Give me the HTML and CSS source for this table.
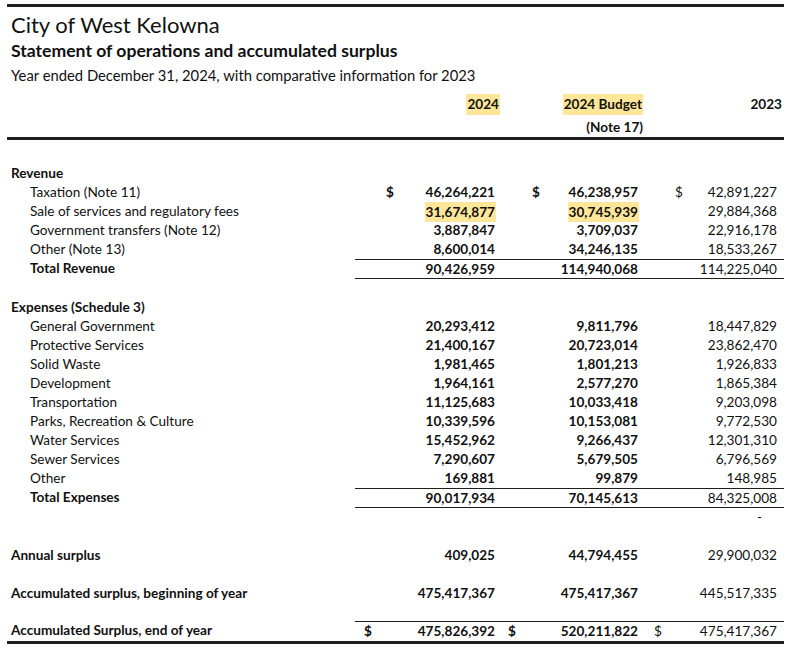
FILE: index.html
```html
<!DOCTYPE html>
<html lang="en">
<head>
<meta charset="utf-8">
<title>City of West Kelowna - Statement of operations</title>
<link rel="stylesheet" href="styles.css">
</head>
<body>
<div class="sheet">
  <div class="head">
    <div class="title">City of West Kelowna</div>
    <div class="subtitle">Statement of operations and accumulated surplus</div>
    <div class="period">Year ended December 31, 2024, with comparative information for 2023</div>
  </div>

  <div class="row colhead">
    <div class="lbl"></div>
    <div class="hc c1"><span class="hl">2024</span></div>
    <div class="hc c2"><span class="hl">2024 Budget</span></div>
    <div class="hc c3">2023</div>
  </div>
  <div class="row notehead">
    <div class="lbl"></div>
    <div class="hc c1"></div>
    <div class="hc c2">(Note 17)</div>
    <div class="hc c3"></div>
  </div>

  <div class="body">
    <div class="row section"><div class="lbl b">Revenue</div><div></div><div></div><div></div></div>
    <div class="row">
      <div class="lbl ind">Taxation (Note 11)</div>
      <div class="m c1 b dl1"><span>$</span><span>46,264,221</span></div>
      <div class="m c2 b dl1"><span>$</span><span>46,238,957</span></div>
      <div class="m c3 dl1"><span>$</span><span>42,891,227</span></div>
    </div>
    <div class="row">
      <div class="lbl ind">Sale of services and regulatory fees</div>
      <div class="m c1 b"><span class="hl">31,674,877</span></div>
      <div class="m c2 b"><span class="hl">30,745,939</span></div>
      <div class="m c3"><span>29,884,368</span></div>
    </div>
    <div class="row">
      <div class="lbl ind">Government transfers (Note 12)</div>
      <div class="m c1 b"><span>3,887,847</span></div>
      <div class="m c2 b"><span>3,709,037</span></div>
      <div class="m c3"><span>22,916,178</span></div>
    </div>
    <div class="row">
      <div class="lbl ind">Other (Note 13)</div>
      <div class="m c1 b"><span>8,600,014</span></div>
      <div class="m c2 b"><span>34,246,135</span></div>
      <div class="m c3"><span>18,533,267</span></div>
    </div>
    <div class="row total">
      <div class="lbl ind b">Total Revenue</div>
      <div class="m c1 b"><span>90,426,959</span></div>
      <div class="m c2 b"><span>114,940,068</span></div>
      <div class="m c3"><span>114,225,040</span></div>
    </div>

    <div class="row section gap"><div class="lbl b">Expenses (Schedule 3)</div><div></div><div></div><div></div></div>
    <div class="row">
      <div class="lbl ind">General Government</div>
      <div class="m c1 b"><span>20,293,412</span></div>
      <div class="m c2 b"><span>9,811,796</span></div>
      <div class="m c3"><span>18,447,829</span></div>
    </div>
    <div class="row">
      <div class="lbl ind">Protective Services</div>
      <div class="m c1 b"><span>21,400,167</span></div>
      <div class="m c2 b"><span>20,723,014</span></div>
      <div class="m c3"><span>23,862,470</span></div>
    </div>
    <div class="row">
      <div class="lbl ind">Solid Waste</div>
      <div class="m c1 b"><span>1,981,465</span></div>
      <div class="m c2 b"><span>1,801,213</span></div>
      <div class="m c3"><span>1,926,833</span></div>
    </div>
    <div class="row">
      <div class="lbl ind">Development</div>
      <div class="m c1 b"><span>1,964,161</span></div>
      <div class="m c2 b"><span>2,577,270</span></div>
      <div class="m c3"><span>1,865,384</span></div>
    </div>
    <div class="row">
      <div class="lbl ind">Transportation</div>
      <div class="m c1 b"><span>11,125,683</span></div>
      <div class="m c2 b"><span>10,033,418</span></div>
      <div class="m c3"><span>9,203,098</span></div>
    </div>
    <div class="row">
      <div class="lbl ind">Parks, Recreation &amp; Culture</div>
      <div class="m c1 b"><span>10,339,596</span></div>
      <div class="m c2 b"><span>10,153,081</span></div>
      <div class="m c3"><span>9,772,530</span></div>
    </div>
    <div class="row">
      <div class="lbl ind">Water Services</div>
      <div class="m c1 b"><span>15,452,962</span></div>
      <div class="m c2 b"><span>9,266,437</span></div>
      <div class="m c3"><span>12,301,310</span></div>
    </div>
    <div class="row">
      <div class="lbl ind">Sewer Services</div>
      <div class="m c1 b"><span>7,290,607</span></div>
      <div class="m c2 b"><span>5,679,505</span></div>
      <div class="m c3"><span>6,796,569</span></div>
    </div>
    <div class="row">
      <div class="lbl ind">Other</div>
      <div class="m c1 b"><span>169,881</span></div>
      <div class="m c2 b"><span>99,879</span></div>
      <div class="m c3"><span>148,985</span></div>
    </div>
    <div class="row total">
      <div class="lbl ind b">Total Expenses</div>
      <div class="m c1 b"><span>90,017,934</span></div>
      <div class="m c2 b"><span>70,145,613</span></div>
      <div class="m c3"><span>84,325,008</span></div>
    </div>
    <div class="row">
      <div class="lbl"></div>
      <div class="m c1"></div>
      <div class="m c2"></div>
      <div class="m c3 dash"><span>-</span></div>
    </div>

    <div class="row gap">
      <div class="lbl b">Annual surplus</div>
      <div class="m c1 b"><span>409,025</span></div>
      <div class="m c2 b"><span>44,794,455</span></div>
      <div class="m c3"><span>29,900,032</span></div>
    </div>
    <div class="row gap">
      <div class="lbl b">Accumulated surplus, beginning of year</div>
      <div class="m c1 b"><span>475,417,367</span></div>
      <div class="m c2 b"><span>475,417,367</span></div>
      <div class="m c3"><span>445,517,335</span></div>
    </div>
    <div class="row final">
      <div class="lbl b">Accumulated Surplus, end of year</div>
      <div class="m c1 b dl2"><span>$</span><span>475,826,392</span></div>
      <div class="m c2 b dl2"><span>$</span><span>520,211,822</span></div>
      <div class="m c3 dl2"><span>$</span><span>475,417,367</span></div>
    </div>
  </div>
</div>
</body>
</html>
```

FILE: styles.css
```css
* { box-sizing: border-box; }

html, body {
  margin: 0;
  padding: 0;
  background: #ffffff;
}

body {
  font-family: "Lato", "Liberation Sans", sans-serif;
  font-size: 13.6px;
  color: #111111;
}

.sheet {
  width: 777px;
  margin: 4px 0 0 7px;
  border-top: 3px solid #1e1e1e;
}

.title {
  margin-top: 6px;
  padding-left: 4px;
  font-size: 22px;
  line-height: 24px;
}

.subtitle {
  margin-top: 4px;
  padding-left: 4px;
  font-size: 17.6px;
  font-weight: 700;
  line-height: 20px;
}

.period {
  margin-top: 4px;
  padding-left: 4px;
  font-size: 14.8px;
  line-height: 20px;
}

.row {
  display: grid;
  grid-template-columns: 348px 146px 144px 139px;
  height: 19px;
  line-height: 19px;
}

.colhead {
  margin-top: 9px;
  height: 21px;
  line-height: 21px;
  font-weight: 700;
}

.notehead {
  margin-top: 2px;
  height: 20px;
  line-height: 20px;
  font-weight: 700;
}

.hc { text-align: right; }
.hc.c1 { padding-right: 1px; }
.hc.c2 { padding-right: 2px; }
.hc.c3 { padding-right: 2px; }

.hl {
  background: #ffe699;
  padding: 0 1px;
  display: inline-block;
}

.body {
  border-top: 3px solid #1e1e1e;
  padding-top: 24px;
  border-bottom: 3px solid #1e1e1e;
}

.lbl {
  padding-left: 4px;
  white-space: nowrap;
}

.lbl.ind { padding-left: 23px; }

.b { font-weight: 700; }

.m {
  display: flex;
  justify-content: flex-end;
  padding-right: 6px;
  white-space: nowrap;
}

.m.c2, .m.c3 { padding-right: 7px; }

.m .hl { margin-right: -1px; height: 20px; line-height: 20px; }

.dl1, .dl2 { justify-content: space-between; }
.dl1.c1 { padding-left: 31px; }
.dl1.c2 { padding-left: 31px; }
.dl1.c3 { padding-left: 30px; }
.dl2.c1 { padding-left: 9px; }
.dl2.c2 { padding-left: 7px; }
.dl2.c3 { padding-left: 9px; }

.m.c3.dash { padding-right: 22px; }

.gap { margin-top: 19px; }

.total {
  height: 20px;
  line-height: 18px;
}

.total .m {
  border-top: 1px solid #1e1e1e;
  border-bottom: 1px solid #1e1e1e;
}

.final {
  margin-top: 18px;
  height: 20px;
  line-height: 18px;
}

.final .m {
  border-top: 1px solid #1e1e1e;
}
```
